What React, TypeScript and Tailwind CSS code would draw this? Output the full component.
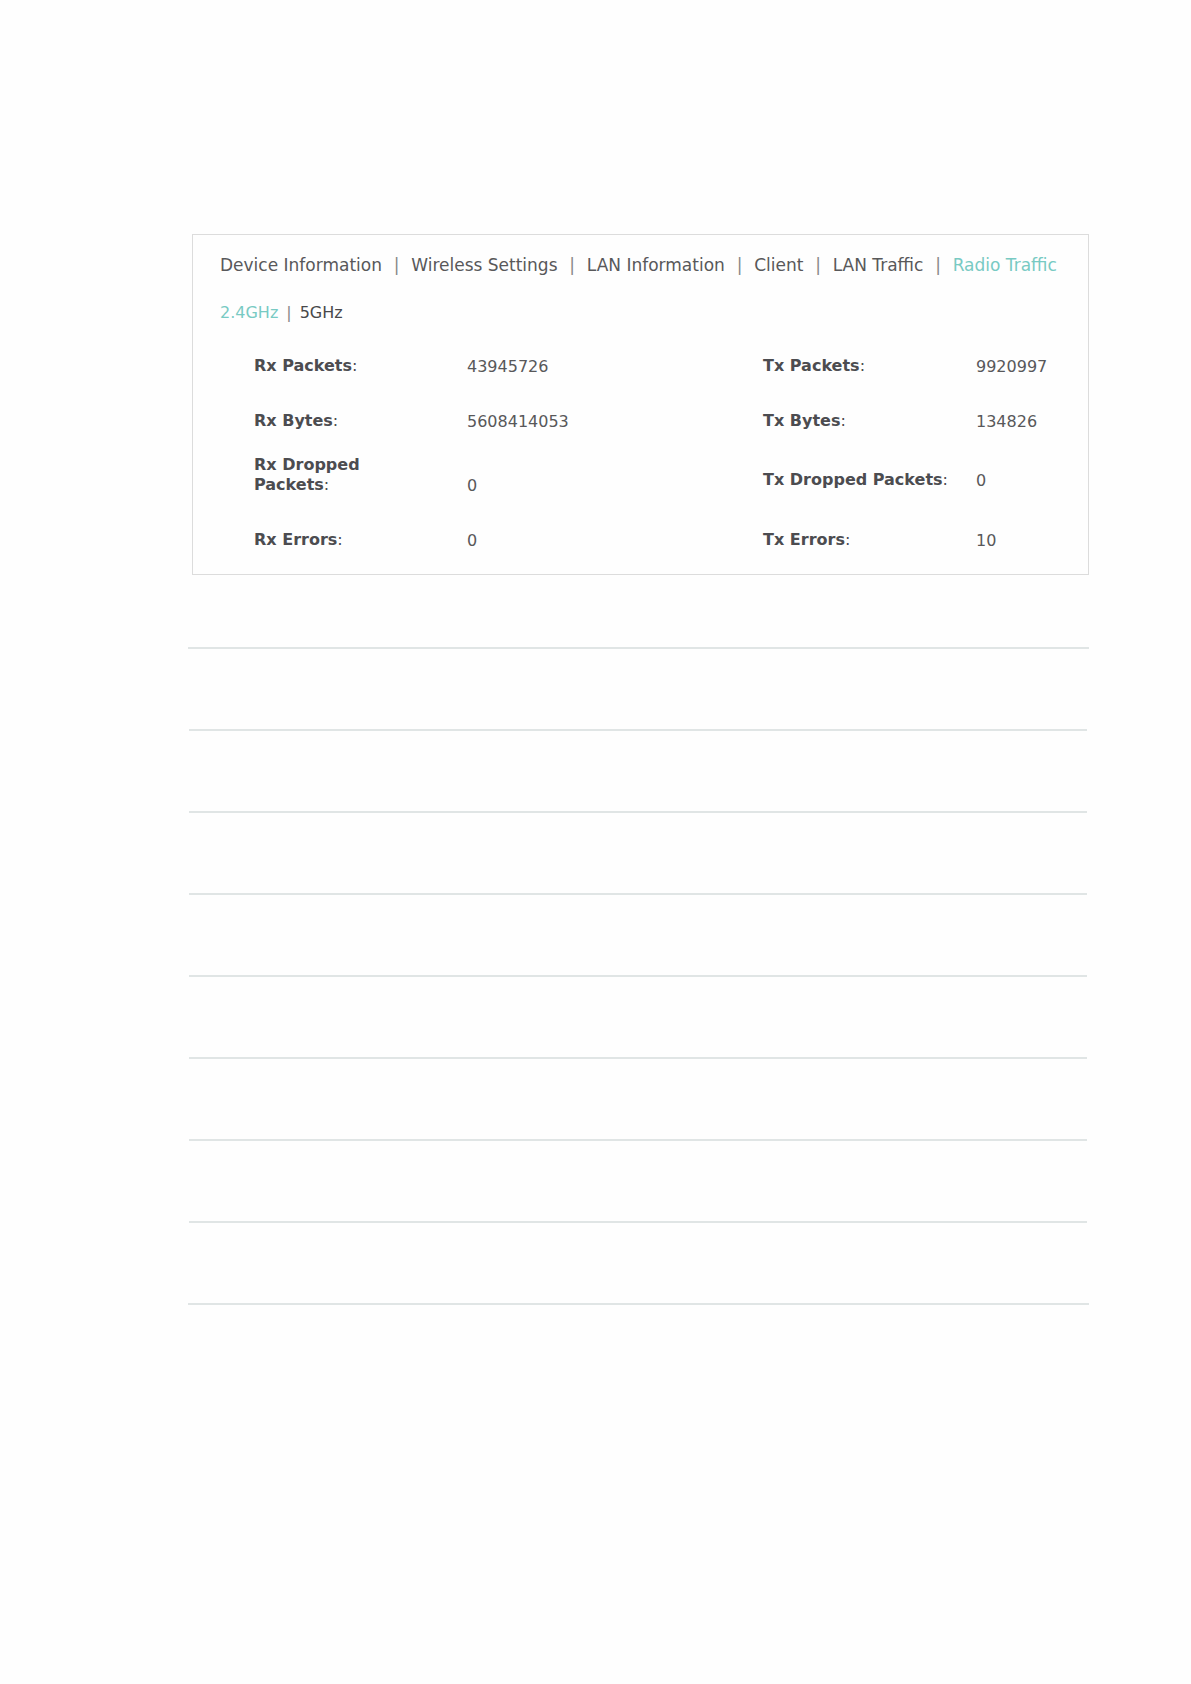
type Stat = { label: string; value: string };

const tabs = [
  "Device Information",
  "Wireless Settings",
  "LAN Information",
  "Client",
  "LAN Traffic",
  "Radio Traffic",
];

const rows: { rx: Stat; tx: Stat; tall?: boolean }[] = [
  { rx: { label: "Rx Packets", value: "43945726" }, tx: { label: "Tx Packets", value: "9920997" } },
  { rx: { label: "Rx Bytes", value: "5608414053" }, tx: { label: "Tx Bytes", value: "134826" } },
  { rx: { label: "Rx Dropped Packets", value: "0" }, tx: { label: "Tx Dropped Packets", value: "0" }, tall: true },
  { rx: { label: "Rx Errors", value: "0" }, tx: { label: "Tx Errors", value: "10" } },
];

function Label({ text, narrow }: { text: string; narrow?: boolean }) {
  return (
    <th
      scope="row"
      className={
        narrow
          ? "p-0 pr-20 pb-2.5 text-left align-middle font-bold text-[#4c4c50]"
          : "p-0 text-left align-middle font-bold whitespace-nowrap text-[#4c4c50]"
      }
    >
      {text}
      <span className="font-normal">:</span>
    </th>
  );
}

export default function App() {
  return (
    <main className="min-h-screen bg-[#fefefe] pt-[234px] pr-[102px] pb-20 pl-[188px] font-['Verdana','DejaVu_Sans',sans-serif] text-base leading-5 text-[#58585a]">
      <section className="ml-1 border border-[#dcdcdc] pb-[7px]">
        <nav aria-label="Access point details" className="flex flex-wrap items-center justify-between pt-5 pr-[31px] pl-[27px] text-[17px] leading-5">
          {tabs.flatMap((tab, i) => [
            i > 0 ? <span key={`${tab}-bar`} className="text-[#888]">|</span> : null,
            <a key={tab} href="#" className={i === 5 ? "text-[#78cac3]" : ""}>
              {tab}
            </a>,
          ])}
        </nav>
        <nav aria-label="Radio band" className="flex gap-2 pt-7 pl-[27px]">
          <a href="#" className="text-[#78cac3]">2.4GHz</a>
          <span className="text-[#888]">|</span>
          <a href="#" className="text-[#48484a]">5GHz</a>
        </nav>
        <div className="pt-[15px] pl-[61px]">
          <table className="w-full table-fixed border-collapse">
            <colgroup>
              <col className="w-[213px]" />
              <col />
              <col className="w-[213px]" />
              <col className="w-[112px]" />
            </colgroup>
            <tbody>
              {rows.map(({ rx, tx, tall }) => (
                <tr key={rx.label} className={tall ? "h-16" : "h-[55px]"}>
                  <Label text={rx.label} narrow={tall} />
                  <td className={tall ? "p-0 pt-3 align-middle" : "p-0 pt-0.5 align-middle"}>{rx.value}</td>
                  <Label text={tx.label} />
                  <td className="p-0 pt-0.5 align-middle">{tx.value}</td>
                </tr>
              ))}
            </tbody>
          </table>
        </div>
      </section>
      <div className="mt-[72px] flex flex-col gap-20">
        {Array.from({ length: 9 }, (_, i) => (
          <hr
            key={i}
            className={i === 0 || i === 8 ? "h-0.5 border-0 bg-[#e0e5e5]" : "mr-0.5 ml-px h-0.5 border-0 bg-[#e0e5e5]"}
          />
        ))}
      </div>
    </main>
  );
}
